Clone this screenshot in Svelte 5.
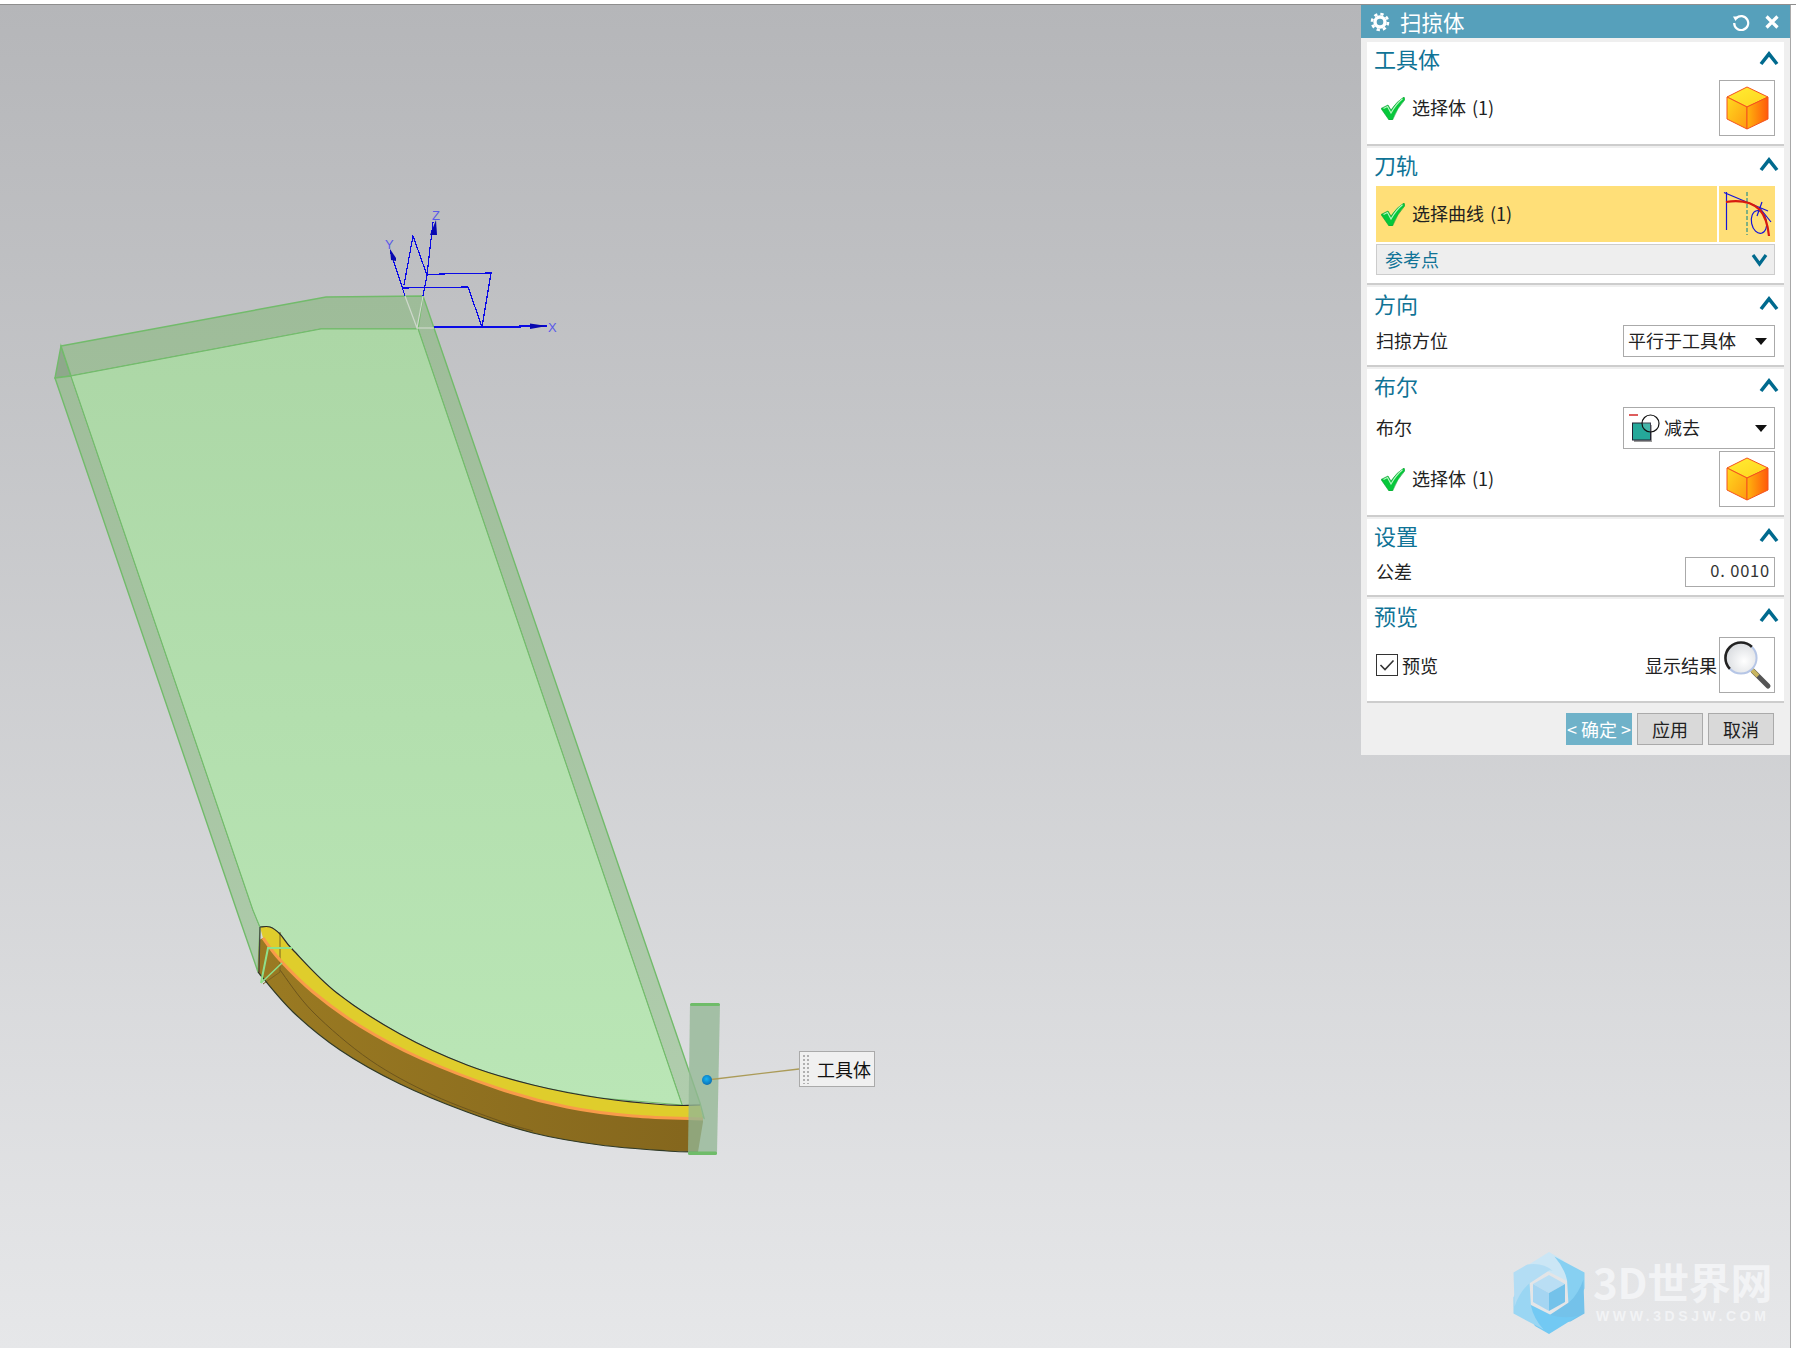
<script lang="ts">
  // geometry of the part, in page pixels
  const topArc = [[260,927],[270,927],[280,934],[293,950],[337,993],[400,1034],[467,1065],[533,1085],[600,1098],[667,1105],[700,1105]];
  const orange = [[263,938],[280,960],[313,992],[360,1026],[420,1058],[500,1089],[567,1107],[633,1116],[703,1119]];
  const bottom = [[258,972],[293,1012],[340,1050],[400,1084],[467,1112],[533,1133],[600,1145],[667,1151],[698,1152]];
  const inner = [[280,970],[313,1012],[370,1060],[433,1095],[500,1121],[533,1131]];

  const rev = (list: number[][]) => [...list].reverse();

  // catmull-rom through the points, as cubic segments
  function curve(list: number[][]) {
    let d = '';
    for (let i = 0; i < list.length - 1; i++) {
      const a = list[Math.max(i - 1, 0)];
      const b = list[i];
      const c = list[i + 1];
      const e = list[Math.min(i + 2, list.length - 1)];
      const c1 = [b[0] + (c[0] - a[0]) / 6, b[1] + (c[1] - a[1]) / 6];
      const c2 = [c[0] - (e[0] - b[0]) / 6, c[1] - (e[1] - b[1]) / 6];
      d += ` C${c1[0].toFixed(1)} ${c1[1].toFixed(1)} ${c2[0].toFixed(1)} ${c2[1].toFixed(1)} ${c[0]} ${c[1]}`;
    }
    return d;
  }
  const open = (list: number[][]) => `M${list[0][0]} ${list[0][1]}` + curve(list);

  const arcBack = rev(topArc).slice(2);
  const plate = `M71 376 L321 329 L418 329 L682 1105 L${arcBack[0].join(' ')}` + curve(arcBack) + ' L253 910 Z';
  const yellow = open(topArc) + ` L703 1119 L${orange[orange.length - 1].join(' ')}` + curve(rev(orange)) + ' Z';
  const brown = open(orange) + ' L703 1122 L698 1152' + curve(rev(bottom)) + ' L259 940 Z';

  const blades = ['#cbe6f5', '#87d0f2', '#74c2ea', '#72c9f3', '#9ad6f3', '#b3ddf4'];
</script>

{#snippet check()}
  <svg class="check" width="24" height="23" viewBox="0 0 24 23">
    <path d="M0 11.5 L7 8 L10 13 Q16 4 23 0 L24 2.5 Q16 11 11.5 23 L8 23 Z" fill="#05c83a" stroke="#0a9a30" stroke-width=".6" />
    <path d="M2.5 11.5 L6.5 9.5 L10 16 Q15 7 21.5 1.8" fill="none" stroke="#b4f5c0" stroke-width="1.2" />
  </svg>
{/snippet}

{#snippet cube()}
  <svg width="54" height="54" viewBox="0 0 54 54">
    <polygon points="27,6 48,16 27,26 7,16" fill="url(#cube-top)" stroke="#f4521e" stroke-width="1" />
    <polygon points="7,16 27,26 27,48 7,38" fill="url(#cube-left)" stroke="#f4521e" stroke-width="1" />
    <polygon points="27,26 48,16 48,38 27,48" fill="url(#cube-right)" stroke="#f4521e" stroke-width="1" />
  </svg>
{/snippet}

{#snippet chevron()}
  <svg class="chev" width="20" height="15" viewBox="0 0 20 15">
    <path d="M2 13 L10 3 L18 13" fill="none" stroke="#006a8e" stroke-width="3.6" />
  </svg>
{/snippet}

{#snippet caret()}
  <svg class="caret" width="12" height="7" viewBox="0 0 12 7"><path d="M0 0 H12 L6 7 Z" fill="#111" /></svg>
{/snippet}

<div class="page">
  <div class="topstrip"></div>
  <div class="canvas"></div>

  <svg class="scene" width="1796" height="1348" viewBox="0 0 1796 1348">
    <defs>
      <linearGradient id="plate-fill" gradientUnits="userSpaceOnUse" x1="0" y1="329" x2="0" y2="1105">
        <stop offset="0" stop-color="#acd7a6" /><stop offset=".5" stop-color="#b3dfae" /><stop offset="1" stop-color="#bae6b6" />
      </linearGradient>
      <linearGradient id="strip-fill" gradientUnits="userSpaceOnUse" x1="0" y1="296" x2="0" y2="1105">
        <stop offset="0" stop-color="#9ebc99" /><stop offset="1" stop-color="#b0cdad" />
      </linearGradient>
      <linearGradient id="cube-top" x1="0" y1="0" x2="1" y2="1">
        <stop offset="0" stop-color="#ffee33" /><stop offset="1" stop-color="#ffd21e" />
      </linearGradient>
      <linearGradient id="cube-left" x1="0" y1="0" x2="1" y2="1">
        <stop offset="0" stop-color="#ffd91f" /><stop offset="1" stop-color="#ff9a10" />
      </linearGradient>
      <linearGradient id="cube-right" x1="0" y1="0" x2="1" y2="0">
        <stop offset="0" stop-color="#ffb40d" /><stop offset="1" stop-color="#ff5a0a" />
      </linearGradient>
      <linearGradient id="brown-fill" x1="0" y1="0" x2="1" y2="0">
        <stop offset="0" stop-color="#9a7a22" /><stop offset="1" stop-color="#84661d" />
      </linearGradient>
      <radialGradient id="dot-fill" cx=".45" cy=".4" r=".6">
        <stop offset="0" stop-color="#16b4f4" /><stop offset="1" stop-color="#0a6fb4" />
      </radialGradient>
    </defs>

    <!-- swept sheet -->
    <polygon points="61,346 55,378 71,376" fill="#8fa88c" stroke="#72bb6b" stroke-width="1.4" />
    <polygon points="55,378 71,376 253,910 260,927 258,972 240,920" fill="url(#strip-fill)" stroke="#72bb6b" stroke-width="1.4" />
    <polygon points="61,346 326,297 423,296 418,329 321,329 71,376" fill="url(#strip-fill)" stroke="#72bb6b" stroke-width="1.4" />
    <polygon points="418,329 423,296 700,1103 704,1118 682,1105" fill="url(#strip-fill)" stroke="#72bb6b" stroke-width="1.4" />
    <path d={plate} fill="url(#plate-fill)" stroke="#72bb6b" stroke-width="1" />

    <!-- cutter path body -->
    <path d={yellow} fill="#dfcd2c" />
    <path d={brown} fill="url(#brown-fill)" />
    <path d={open(inner)} fill="none" stroke="#6d551c" stroke-width="1" />
    <polyline points="280,932 280,972 263,984" fill="none" stroke="#7b6320" stroke-width="1" />
    <path d={open(topArc)} fill="none" stroke="#2b2b2b" stroke-width="1.2" />
    <path d={open(bottom)} fill="none" stroke="#2f3a28" stroke-width="1.2" />
    <polyline points="260,927 259,972" fill="none" stroke="#444" stroke-width="1.2" />
    <path d={open(orange)} fill="none" stroke="#f99b4a" stroke-width="3" />
    <polyline points="261,983 268,948 292,948" fill="none" stroke="#8fe08a" stroke-width="2" />
    <line x1="261" y1="983" x2="282" y2="963" stroke="#8fe08a" stroke-width="1.5" />

    <!-- tool cylinder -->
    <polygon points="690,1004 720,1004 717,1153 688,1153" fill="#93b795" fill-opacity=".78" />
    <rect x="690" y="1003" width="30" height="3" rx="1.5" fill="#6fbc69" />
    <rect x="688" y="1151.5" width="29" height="3.5" rx="1.5" fill="#6fbc69" />

    <!-- leader to the label -->
    <line x1="707" y1="1080" x2="799" y2="1069" stroke="#ab9b58" stroke-width="1.3" />
    <circle cx="707" cy="1080" r="5" fill="url(#dot-fill)" />

    <!-- datum csys -->
    <g fill="none" stroke="#0a0ae6" stroke-width="1.2" shape-rendering="crispEdges">
      <polyline points="434,327 520,327 520,326 547,326" />
      <polyline points="404,285 413,236 427,275 440,274 491,273 482,327 468,287 403,288" />
      <polyline points="390,250 405,296" />
      <polyline points="433,222 427,275 423,296" />
    </g>
    <g fill="none" stroke="#cfd8cc" stroke-width="1.2">
      <polyline points="405,296 417,328 423,296" />
      <line x1="417" y1="328" x2="434" y2="328" />
    </g>
    <g fill="#0808b0">
      <polygon points="390,249 396,258 396,261 391,260" />
      <polygon points="436,220 437,235 430,235" />
      <polygon points="530,323.5 547,326 530,329" />
    </g>
    <g class="axis-letter">
      <text x="385" y="249">Y</text>
      <text x="432" y="220">Z</text>
      <text x="548" y="332">X</text>
    </g>

    <!-- watermark mark -->
    <g transform="translate(1549 1293)">
      {#each blades as fill, i}
        <path d={`M-29 -23 L0 -41 L14 -33 Q24 -20 21 -8 L20 -11 L-2 -22 Q-14 -26 -29 -23 Z`} {fill} transform={`rotate(${i * 60})`} />
      {/each}
      <polygon points="0,-18 16,-9 0,0 -16,-9" fill="#b9def4" />
      <polygon points="-16,-9 0,0 0,18 -16,9" fill="#a5d5f2" />
      <polygon points="16,-9 0,0 0,18 16,9" fill="#74c2ea" />
    </g>
  </svg>

  <div class="tag">
    <span class="grip"></span>
    <span>工具体</span>
  </div>

  <div class="mark">
    <div class="mark-cn">3D世界网</div>
    <div class="mark-en">WWW.3DSJW.COM</div>
  </div>

  <div class="panel">
    <div class="titlebar">
      <svg width="20" height="20" viewBox="0 0 20 20">
        <circle cx="10" cy="10" r="5" fill="none" stroke="#fff" stroke-width="3.4" />
        <circle cx="10" cy="10" r="8" fill="none" stroke="#fff" stroke-width="2.6" stroke-dasharray="3.3 3" />
      </svg>
      <span class="title">扫掠体</span>
      <svg class="reset" width="18" height="18" viewBox="0 0 18 18">
        <path d="M4.2 5.2 A7 7 0 1 1 2.2 10" fill="none" stroke="#fff" stroke-width="2.2" />
        <path d="M1 3.5 L7 3.5 L3.5 8 Z" fill="#fff" />
      </svg>
      <svg width="14" height="14" viewBox="0 0 14 14">
        <path d="M1.5 1.5 L12.5 12.5 M12.5 1.5 L1.5 12.5" stroke="#fff" stroke-width="3.2" />
      </svg>
    </div>

    <section>
      <header><span>工具体</span>{@render chevron()}</header>
      <div class="row">
        <div class="pick">{@render check()}<span>选择体 (1)</span></div>
        <button class="iconbtn">{@render cube()}</button>
      </div>
    </section>

    <section>
      <header><span>刀轨</span>{@render chevron()}</header>
      <div class="row">
        <div class="pick active">{@render check()}<span>选择曲线 (1)</span></div>
        <div class="iconbtn curve">
          <svg width="56" height="56" viewBox="0 0 56 56">
            <g fill="none" stroke="#1414d8" stroke-width="1.2">
              <path d="M7.5 6 V44" />
              <path d="M5 6.5 L49 25" />
              <ellipse cx="40" cy="36" rx="7.5" ry="11.5" transform="rotate(-12 40 36)" />
              <path d="M43 16 L38 30 M40 21 L52 36" />
            </g>
            <path d="M28 6 V49" stroke="#00808a" stroke-width="1" stroke-dasharray="4 2" />
            <path d="M7 16 C20 14 32 15 41 24 C47 31 49 40 50 50" fill="none" stroke="#d81a10" stroke-width="2.2" />
          </svg>
        </div>
      </div>
      <div class="refpoint"><span>参考点</span>
        <svg width="17" height="14" viewBox="0 0 17 14"><path d="M2 2 L8.5 11 L15 2" fill="none" stroke="#006a8e" stroke-width="3.2" /></svg>
      </div>
    </section>

    <section>
      <header><span>方向</span>{@render chevron()}</header>
      <div class="row field">
        <span>扫掠方位</span>
        <div class="select"><span>平行于工具体</span>{@render caret()}</div>
      </div>
    </section>

    <section>
      <header><span>布尔</span>{@render chevron()}</header>
      <div class="row field">
        <span>布尔</span>
        <div class="select tall">
          <svg width="31" height="28" viewBox="0 0 31 28">
            <path d="M0 1 H9" stroke="#d01818" stroke-width="1.4" />
            <rect x="5" y="11" width="18" height="17" fill="#9a9a9a" />
            <rect x="3.5" y="9" width="18" height="17" fill="#25a89a" stroke="#223" stroke-width="1" />
            <circle cx="21.5" cy="9.5" r="8.5" fill="#fff" fill-opacity=".15" stroke="#111" stroke-width="1.2" />
          </svg>
          <span class="select-label">减去</span>{@render caret()}
        </div>
      </div>
      <div class="row second">
        <div class="pick">{@render check()}<span>选择体 (1)</span></div>
        <button class="iconbtn">{@render cube()}</button>
      </div>
    </section>

    <section>
      <header><span>设置</span>{@render chevron()}</header>
      <div class="row field">
        <span>公差</span>
        <div class="number">0. 0010</div>
      </div>
    </section>

    <section>
      <header><span>预览</span>{@render chevron()}</header>
      <div class="row">
        <label class="toggle">
          <span class="box">
            <svg width="20" height="20" viewBox="0 0 20 20"><path d="M3.5 10 L8 14.5 L16.5 5.5" fill="none" stroke="#333" stroke-width="1.6" /></svg>
          </span>
          <span>预览</span>
        </label>
        <div class="result">
          <span>显示结果</span>
          <button class="iconbtn">
            <svg width="54" height="54" viewBox="0 0 54 54">
              <defs>
                <radialGradient id="glass" cx=".6" cy=".6" r=".7">
                  <stop offset="0" stop-color="#fff" /><stop offset="1" stop-color="#d5d8dc" />
                </radialGradient>
              </defs>
              <path d="M33 33 L48 48" stroke="#555" stroke-width="5" stroke-linecap="round" />
              <path d="M32 32 L38 38" stroke="#c8b560" stroke-width="4" />
              <circle cx="21" cy="20" r="15.5" fill="url(#glass)" />
              <path d="M10 31 A15.5 15.5 0 0 1 32 9" fill="none" stroke="#222" stroke-width="2.6" />
              <path d="M32 9 A15.5 15.5 0 0 1 10 31" fill="none" stroke="#b6c6e6" stroke-width="2" />
            </svg>
          </button>
        </div>
      </div>
    </section>

    <footer>
      <button class="act primary">&lt; 确定 &gt;</button>
      <button class="act">应用</button>
      <button class="act">取消</button>
    </footer>
  </div>
</div>

<style>
  :global(body) {
    margin: 0;
    background: #fff;
  }

  .page {
    position: relative;
    width: 1796px;
    height: 1348px;
    overflow: hidden;
    display: flex;
    flex-direction: column;
    font-family: "Noto Sans CJK SC", "Noto Sans", sans-serif;
    color: #222;
    font-size: 18px;
  }

  .topstrip {
    height: 4px;
    background: #fff;
    border-bottom: 1px solid #8e8e8e;
    flex-shrink: 0;
  }

  .canvas {
    flex: 1;
    width: 1790px;
    background: linear-gradient(180deg, #b5b6b9 0%, #e6e7e9 100%);
    border-right: 1px solid #a8a8a8;
  }

  .scene {
    position: absolute;
    left: 0;
    top: 0;
  }

  .axis-letter text {
    font-family: "Liberation Sans", sans-serif;
    font-size: 13px;
    fill: #5a5ae8;
  }

  .tag {
    position: absolute;
    left: 799px;
    top: 1051px;
    width: 76px;
    height: 36px;
    box-sizing: border-box;
    border: 1px solid #aaa;
    background: #f0f0f0;
    display: flex;
    align-items: center;
    gap: 8px;
    padding-left: 2px;
    font-size: 18px;
    color: #111;
  }

  .grip {
    width: 7px;
    height: 30px;
    background-image: radial-gradient(#b0b0b0 1.3px, transparent 1.5px);
    background-size: 4px 4px;
  }

  .mark {
    position: absolute;
    left: 1593px;
    top: 1254px;
    width: 180px;
    color: #f2f3f5;
  }

  .mark-cn {
    font-size: 42px;
    font-weight: 700;
    line-height: 54px;
    white-space: nowrap;
    letter-spacing: -0.3px;
  }

  .mark-en {
    font-family: "Liberation Sans", sans-serif;
    font-size: 14px;
    font-weight: 700;
    letter-spacing: 3.6px;
    line-height: 16px;
    margin-left: 3px;
    white-space: nowrap;
  }

  .panel {
    position: absolute;
    left: 1361px;
    top: 5px;
    width: 429px;
    box-sizing: border-box;
    background: #efefef;
    padding: 0 6px;
  }

  .titlebar {
    height: 33px;
    margin: 0 -6px 4px;
    padding: 0 11px 0 9px;
    background: #56a0bb;
    color: #fff;
    display: flex;
    align-items: center;
    gap: 10px;
  }

  .title {
    font-size: 21.5px;
    flex: 1;
    line-height: 33px;
  }

  .reset {
    margin-right: 5px;
  }

  section {
    background: #fff;
    padding: 0 9px 8px;
    border-bottom: 2px solid #cdcdcd;
    margin-bottom: 2px;
  }

  header {
    height: 38px;
    box-sizing: border-box;
    padding-bottom: 7px;
    margin-left: -2px;
    display: flex;
    align-items: center;
    justify-content: space-between;
    color: #0f7396;
    font-size: 22px;
  }

  .chev {
    margin-right: -4px;
    margin-top: 1px;
  }

  .row {
    display: flex;
    align-items: stretch;
    justify-content: space-between;
    gap: 2px;
  }

  .row.second {
    margin-top: 2px;
  }

  .row.field {
    align-items: center;
  }

  .pick span,
  .refpoint span,
  .field > span,
  .select span {
    padding-bottom: 2px;
  }

  .pick {
    flex: 1;
    display: flex;
    align-items: center;
    gap: 7px;
    padding-left: 5px;
    height: 56px;
    word-spacing: 2px;
  }

  .pick.active {
    background: #ffdf78;
  }

  .iconbtn {
    width: 56px;
    height: 56px;
    box-sizing: border-box;
    border: 1px solid #aaa;
    background: #fff;
    padding: 0;
    display: flex;
    align-items: center;
    justify-content: center;
    flex-shrink: 0;
  }

  .iconbtn.curve {
    border: 0;
    background: #ffdf78;
  }

  .refpoint {
    margin-top: 2px;
    height: 31px;
    box-sizing: border-box;
    border: 1px solid #ccc;
    background: #eee;
    display: flex;
    align-items: center;
    justify-content: space-between;
    padding: 0 6px 0 8px;
    color: #0f7396;
  }

  .select {
    width: 152px;
    height: 32px;
    box-sizing: border-box;
    border: 1px solid #aaa;
    background: #fff;
    display: flex;
    align-items: center;
    padding: 0 7px 0 4px;
  }

  .select > span:first-child {
    flex: 1;
  }

  .select.tall {
    height: 42px;
    padding-left: 5px;
  }

  .select-label {
    flex: 1;
    margin-left: 4px;
  }

  .number {
    width: 90px;
    height: 30px;
    box-sizing: border-box;
    border: 1px solid #aaa;
    background: #fff;
    text-align: right;
    padding-right: 4px;
    line-height: 25px;
    font-size: 16.5px;
    letter-spacing: 0.8px;
    color: #333;
  }

  .toggle {
    display: flex;
    align-items: center;
    gap: 4px;
  }

  .box {
    width: 22px;
    height: 22px;
    box-sizing: border-box;
    border: 1px solid #333;
    display: flex;
    align-items: center;
    justify-content: center;
  }

  .result {
    display: flex;
    align-items: center;
    gap: 2px;
  }

  footer {
    display: flex;
    justify-content: flex-end;
    gap: 5px;
    padding: 8px 10px 10px 0;
  }

  .act {
    width: 66px;
    height: 32px;
    box-sizing: border-box;
    border: 1px solid #aaa;
    background: #d9d9d9;
    color: #222;
    font: inherit;
    padding: 0;
    white-space: nowrap;
    overflow: hidden;
  }

  .act.primary {
    background: #6fb2c9;
    border-color: #6fb2c9;
    color: #fff;
  }
</style>
